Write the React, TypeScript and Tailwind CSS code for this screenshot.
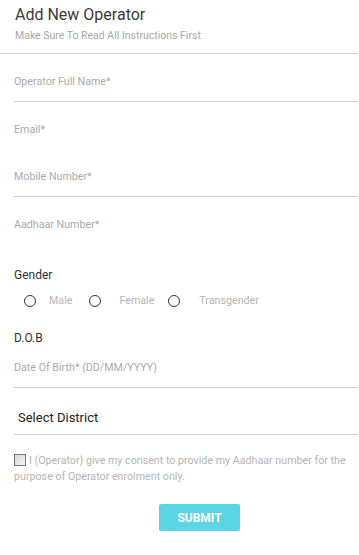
export default function App() {
  const fields = [
    { label: 'Operator Full Name*', line: true, h: 'h-[48px]' },
    { label: 'Email*', line: false, h: 'h-[47px]' },
    { label: 'Mobile Number*', line: true, h: 'h-[48px]' },
    { label: 'Aadhaar Number*', line: false, h: 'h-[47px]' },
  ]

  return (
    <div className="min-h-screen w-[359px] bg-white font-['Roboto',sans-serif]">
      {/* header */}
      <div className="border-b border-[#d2d2d2] pb-[10px] pl-[15px] mr-[1px]">
        <h1 className="pt-[4px] text-[16px] leading-[22px] text-[#3a3a3a]">Add New Operator</h1>
        <p className="mt-[3px] text-[10.5px] leading-[14px] text-[#a8a8a8]">
          Make Sure To Read All Instructions First
        </p>
      </div>

      <div className="pl-[14px] pr-[1px]">
        {fields.map((f) => (
          <div
            key={f.label}
            className={`${f.h} pt-[18px] border-b ${f.line ? 'border-[#d2d2d2]' : 'border-transparent'}`}
          >
            <span className="block text-[10.7px] leading-[20px] text-[#aaa]">{f.label}</span>
          </div>
        ))}

        <div className="mt-[23px] text-[12px] leading-[16px] text-[#333]">Gender</div>
        <div className="mt-[10px] flex items-center pl-[10px] text-[10.7px] leading-[16px] text-[#b4b4b4]">
          <span className="h-[12px] w-[12px] rounded-full border-[1.3px] border-[#333]" />
          <span className="ml-[13px]">Male</span>
          <span className="ml-[17px] h-[12px] w-[12px] rounded-full border-[1.3px] border-[#333]" />
          <span className="ml-[18px]">Female</span>
          <span className="ml-[14px] h-[12px] w-[12px] rounded-full border-[1.3px] border-[#333]" />
          <span className="ml-[19px]">Transgender</span>
        </div>

        <div className="mt-[21px] text-[12px] leading-[16px] text-[#333]">D.O.B</div>
        <div className="border-b border-[#d2d2d2] pb-[9px] pt-[12px]">
          <span className="block text-[10.7px] leading-[20px] text-[#aaa]">Date Of Birth* (DD/MM/YYYY)</span>
        </div>

        <div className="mt-[20px] border-b border-[#d2d2d2] pb-[6px] pl-[4px]">
          <span className="block text-[13px] leading-[20px] text-[#222]">Select District</span>
        </div>

        <p className="mt-[18px] pr-[3px] text-[10.7px] leading-[16px] text-[#b4b4b4]">
          <span className="mr-[3px] inline-block h-[12px] w-[12px] border border-[#777] bg-gradient-to-br from-[#d8d8d8] to-[#f4f4f4] align-[-2px]" />
          I (Operator) give my consent to provide my Aadhaar number for the purpose of Operator enrolment only.
        </p>

        <button className="ml-[145px] mt-[19px] h-[27px] w-[81px] rounded-[2px] bg-[#5bd4e4] text-[12px] font-bold text-white">
          SUBMIT
        </button>
      </div>
    </div>
  )
}
